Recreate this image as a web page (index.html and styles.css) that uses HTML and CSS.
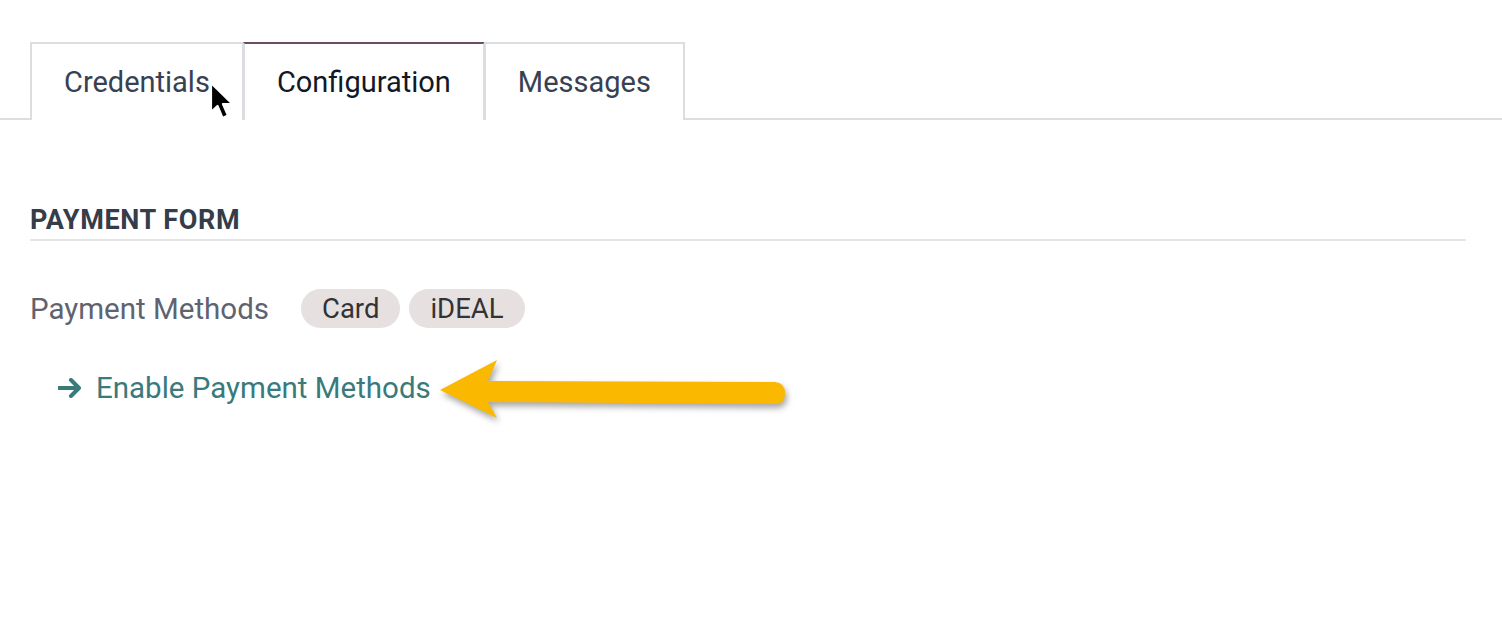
FILE: index.html
```html
<!DOCTYPE html>
<html>
<head>
<title>Payment Provider</title>
<link rel="stylesheet" href="styles.css">
</head>
<body>
<div class="sheet">
    <ul class="tabs">
        <li class="tab">Credentials</li>
        <li class="tab active">Configuration</li>
        <li class="tab">Messages</li>
    </ul>

    <div class="pane">
        <h2 class="separator">PAYMENT FORM</h2>
        <div class="field">
            <span class="label">Payment Methods</span>
            <span class="tag">Card</span>
            <span class="tag">iDEAL</span>
        </div>
        <div class="link-row">
            <a class="link" href="#">
                <svg class="arrow" width="25" height="20" viewBox="0 0 25 20">
                    <path d="M1 10 H21 M13 2 L21 10 L13 18" fill="none" stroke="#397a7c" stroke-width="4" stroke-linecap="round" stroke-linejoin="round"/>
                </svg>
                Enable Payment Methods
            </a>
        </div>
    </div>

    <!-- yellow annotation arrow -->
    <svg class="callout" width="370" height="80" viewBox="0 0 370 80">
        <path fill="#fbb800"
              d="M2 32 L59 2 L50 23 L337 24 Q347 25 347 35 Q347 46 337 46 L50 44 L59 60 Z"/>
    </svg>

    <!-- mouse pointer -->
    <svg class="pointer" width="28" height="40" viewBox="0 0 28 40">
        <path d="M2 2 L2 31 L8.5 25 L13.5 37 L19 34.5 L14 23 L23.5 23 Z" fill="#000" stroke="#fff" stroke-width="2.2" stroke-linejoin="round"/>
    </svg>
</div>
</body>
</html>
```

FILE: styles.css
```css
html, body {
    margin: 0;
    padding: 0;
    background-color: #fff;
}
body {
    font-family: Roboto, "Noto Sans", Arial, sans-serif;
    color: #374151;
}
.sheet {
    position: relative;
    box-sizing: border-box;
    min-height: 100vh;
    padding-top: 42px;
}
ul.tabs {
    display: flex;
    list-style: none;
    margin: 0;
    padding: 0 0 0 30px;
    border-bottom: 2px solid #dcdde0;
}
li.tab {
    font-size: 29px;
    line-height: 38px;
    padding: 19px 32px 17px 32px;
    border: 2px solid #dcdde0;
    border-bottom: 0;
    margin-bottom: -2px;
    margin-right: -1px;
    color: #374151;
    background-color: #fff;
}
li.tab.active {
    border-top: 2px solid #6c4c63;
    color: #111827;
    padding-bottom: 19px;
}
.pane {
    padding: 0 36px 0 30px;
}
h2.separator {
    margin: 85px 0 0 0;
    font-size: 27px;
    font-weight: bold;
    letter-spacing: 0.6px;
    color: #353c4a;
    line-height: 30px;
    padding-bottom: 4px;
    border-bottom: 2px solid #e4e4e4;
}
.field {
    display: flex;
    align-items: center;
    margin-top: 48px;
}
.label {
    font-size: 29.5px;
    color: #5f6370;
    margin-right: 32px;
}
.tag {
    font-size: 27.5px;
    line-height: 39px;
    padding: 0 21px;
    border-radius: 20px;
    background-color: #e6e0e0;
    color: #333;
    margin-right: 9px;
}
.link-row {
    display: flex;
    align-items: center;
    margin-top: 43px;
    padding-left: 28px;
}
a.link {
    display: flex;
    align-items: center;
    font-size: 29.5px;
    color: #397a7c;
    text-decoration: none;
}
.arrow {
    margin-right: 13px;
}
.callout {
    position: absolute;
    left: 438px;
    top: 358px;
    overflow: visible;
    filter: drop-shadow(2px 4px 3px rgba(0, 0, 0, 0.35));
}
.pointer {
    position: absolute;
    left: 209px;
    top: 81px;
}
```
